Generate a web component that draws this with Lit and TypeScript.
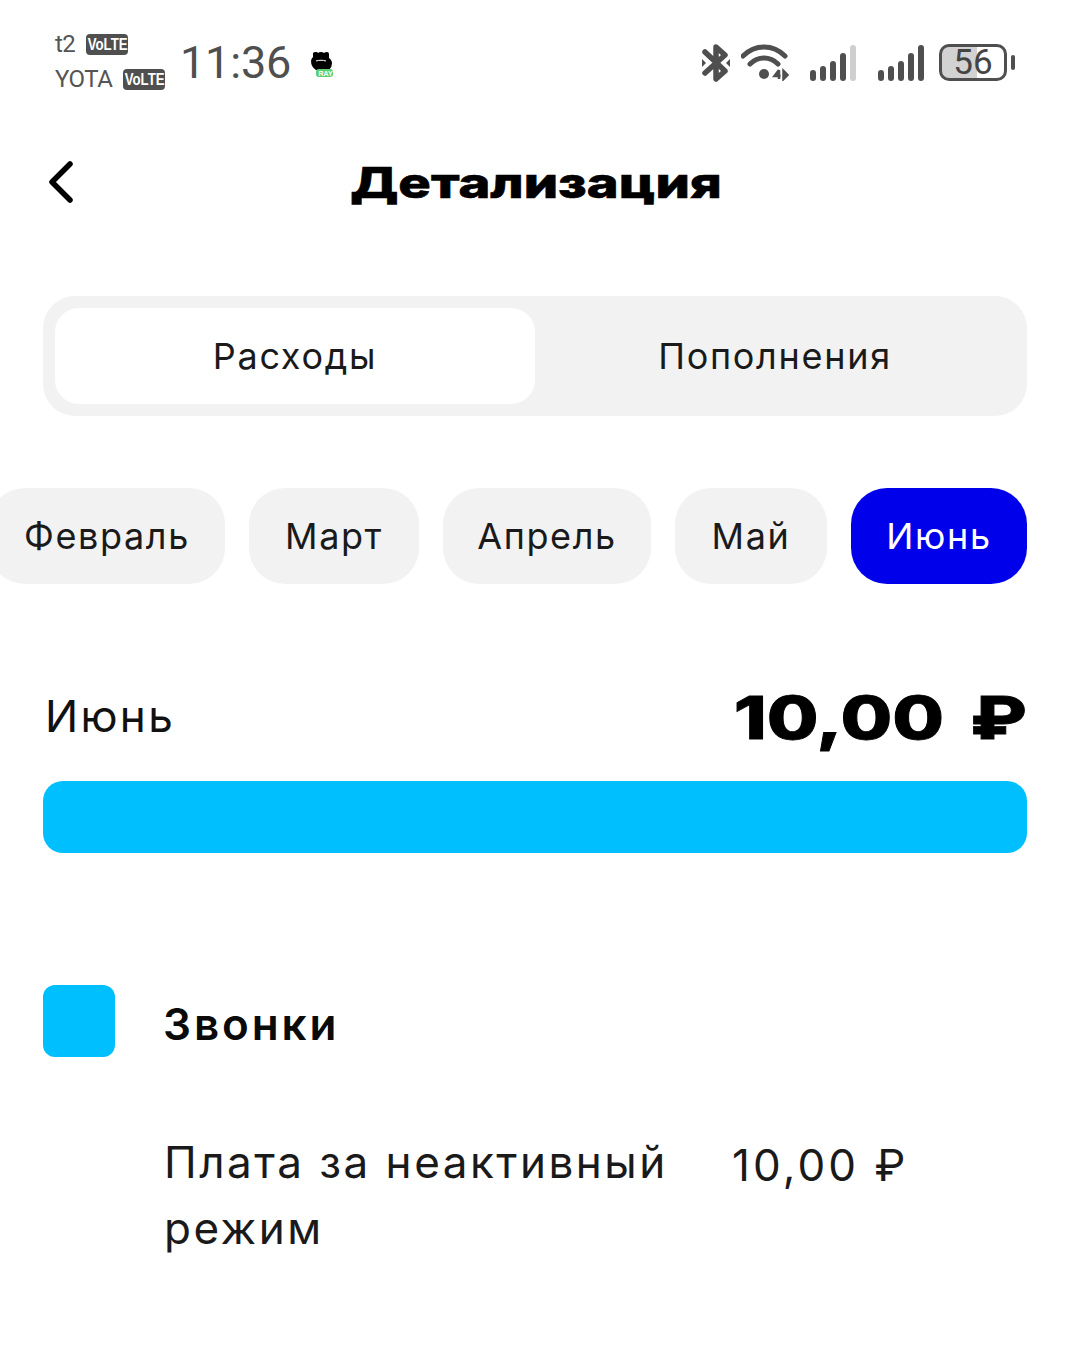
import { LitElement, html, svg, css } from "lit";
import { customElement } from "lit/decorators.js";

const months: [string, number, boolean][] = [
  ["Февраль", 236, false],
  ["Март", 170, false],
  ["Апрель", 208, false],
  ["Май", 152, false],
  ["Июнь", 176, true],
];

const bars = (heights: number[], lastDim: boolean) => html`
  <svg class="signal" width="46" height="38" viewBox="0 0 46 38">
    ${heights.map(
      (h, i) => svg`<rect x=${i * 10} y=${37 - h} width="6" height=${h} rx="3"
        fill=${lastDim && i === heights.length - 1 ? "#cfcfcf" : "#4f4f4f"}></rect>`
    )}
  </svg>`;

@customElement("app-root")
export class AppRoot extends LitElement {
  static styles = css`
    :host {
      display: block;
      width: 1065px;
      height: 1369px;
      background: #fff;
      overflow: hidden;
      font-family: "Inter", "Liberation Sans", sans-serif;
      color: #000;
    }
    .status {
      height: 124px;
      box-sizing: border-box;
      padding: 30px 50px 0 55px;
      display: flex;
      align-items: flex-start;
    }
    .carriers {
      width: 125px;
      display: flex;
      flex-direction: column;
      gap: 6px;
      font-family: "Roboto", sans-serif;
      font-size: 24px;
      line-height: 29px;
      color: #555;
    }
    .carrier {
      display: flex;
      align-items: center;
      gap: 11px;
      letter-spacing: -0.5px;
    }
    .volte {
      background: #4f4f4f;
      color: #fff;
      border-radius: 4px;
      height: 21px;
      width: 42px;
      display: flex;
      align-items: center;
      justify-content: center;
      letter-spacing: 0;
    }
    .volte span {
      display: block;
      font: 700 17px/21px "Liberation Sans", sans-serif;
      transform: scaleX(0.78);
    }
    .clock {
      font-family: "Roboto", sans-serif;
      font-size: 45px;
      line-height: 66px;
      color: #4f4f4f;
      letter-spacing: -0.2px;
      font-weight: 400;
    }
    .fist {
      margin: 21px 0 0 19px;
    }
    .fist-label {
      font: 700 7px "Liberation Sans", sans-serif;
      fill: #fff;
    }
    .icons {
      margin-left: auto;
      padding-top: 14px;
      display: flex;
      align-items: flex-start;
    }
    .wifi {
      margin-left: 9px;
      margin-top: -1px;
    }
    .signal {
      display: block;
      margin-left: 21px;
      margin-top: 0;
    }
    .signal + .signal {
      margin-left: 22px;
    }
    .battery {
      margin-left: 15px;
      width: 68px;
      height: 37px;
      box-sizing: border-box;
      border: 3px solid #4f4f4f;
      border-radius: 10px;
      background: linear-gradient(90deg, #d2d2d2 56%, #fff 56%);
      display: flex;
      align-items: center;
      justify-content: center;
      font: 400 35px/31px "Roboto", sans-serif;
      color: #444;
    }
    .nub {
      width: 4px;
      height: 15px;
      border-radius: 2px;
      background: #4f4f4f;
      margin: 11px 0 0 4px;
    }
    .header {
      height: 118px;
      box-sizing: border-box;
      padding-left: 6px;
      display: flex;
      align-items: center;
      justify-content: center;
      position: relative;
    }
    .back {
      position: absolute;
      left: 46px;
      top: 34px;
    }
    h1 {
      margin: 0;
      font: 800 42px/60px "Inter", sans-serif;
      transform: scaleX(1.29);
      letter-spacing: 0;
      -webkit-text-stroke: 0.6px #000;
    }
    .tabs {
      margin: 54px 38px 0 43px;
      height: 120px;
      box-sizing: border-box;
      padding: 12px;
      background: #f2f2f2;
      border-radius: 32px;
      display: grid;
      grid-template-columns: 1fr 1fr;
    }
    .tab {
      display: flex;
      align-items: center;
      justify-content: center;
      font-size: 36px;
      letter-spacing: 1.7px;
      color: #1a1a1a;
      border-radius: 24px;
    }
    .tab.on {
      background: #fff;
    }
    .chips {
      margin-top: 72px;
      padding-right: 38px;
      display: flex;
      justify-content: flex-end;
      gap: 24px;
    }
    .chip {
      flex: none;
      height: 96px;
      display: flex;
      align-items: center;
      justify-content: center;
      background: #f2f2f2;
      border-radius: 36px;
      font-size: 36px;
      letter-spacing: 1.6px;
      color: #1a1a1a;
    }
    .chip.on {
      background: #0000eb;
      color: #fff;
    }
    .total {
      margin: 98px 38px 0 43px;
      height: 72px;
      display: flex;
      align-items: center;
      justify-content: space-between;
    }
    .total .label {
      font-size: 44px;
      letter-spacing: 2.3px;
      color: #111;
      padding: 0 0 4px 2px;
    }
    .total .sum {
      font: 800 59px/72px "Inter", sans-serif;
      display: inline-block;
      transform-origin: right center;
      transform: scaleX(1.27);
      word-spacing: 7.5px;
      -webkit-text-stroke: 0.8px #000;
    }
    .bar {
      margin: 27px 38px 0 43px;
      height: 72px;
      border-radius: 20px;
      background: #00bfff;
    }
    .cat {
      margin: 132px 38px 0 43px;
      display: flex;
      align-items: center;
      gap: 48px;
    }
    .swatch {
      width: 72px;
      height: 72px;
      border-radius: 12px;
      background: #00bfff;
    }
    .cat .name {
      font-size: 44px;
      font-weight: 600;
      letter-spacing: 2.9px;
      color: #0a0a0a;
      padding-top: 6px;
    }
    .row {
      margin: 72px 38px 0 164px;
      display: flex;
      align-items: flex-start;
    }
    .row .desc {
      width: 568px;
      font-size: 44px;
      line-height: 66px;
      letter-spacing: 2.5px;
      color: #1a1a1a;
    }
    .row .amt {
      font-size: 44px;
      line-height: 72px;
      letter-spacing: 3.1px;
      color: #1a1a1a;
      white-space: nowrap;
    }
  `;

  render() {
    return html`
      <div class="status">
        <div class="carriers">
          <div class="carrier"><span>t2</span><span class="volte"><span>VoLTE</span></span></div>
          <div class="carrier"><span>YOTA</span><span class="volte"><span>VoLTE</span></span></div>
        </div>
        <div class="clock">11:36</div>
        <svg class="fist" width="24" height="27" viewBox="0 0 24 27">
          <path d="M3 2.5Q3 1 5 1h1.5Q7.500 1 8 2Q9 1 11 1t3 1Q15 1 17 1t2 2V7Q22 9 22 12.500 22 16 19 19H6Q1 16 1 10 1 8 3 6z" fill="#000"></path>
          <path d="M6 10c3-1 7-1 10 0" stroke="#fff" stroke-width="1" fill="none"></path>
          <rect x="6" y="18" width="17" height="8" rx="3" fill="#5ccf73"></rect>
          <text class="fist-label" x="8.500" y="24.500">RAY</text>
        </svg>
        <div class="icons">
          <svg width="30" height="38" viewBox="0 0 30 38" fill="none" stroke="#4f4f4f" stroke-width="5.500" stroke-linejoin="round" stroke-linecap="round">
            <path d="M3 8l20 19-9 8V3l9 8L3 29"></path>
            <path d="M0 15v8l4-4zM28 15v8l-4-4z" fill="#4f4f4f" stroke="none"></path>
          </svg>
          <svg class="wifi" width="48" height="38" viewBox="0 0 48 38" fill="none" stroke="#4f4f4f" stroke-width="5" stroke-linecap="round">
            <path d="M2 13C14 1 32 1 44 13"></path>
            <path d="M9 21c8-8 20-8 28 0"></path>
            <circle cx="23" cy="31" r="5" fill="#4f4f4f" stroke="none"></circle>
            <path d="M38 27l-4.500 6h6M38 27v9M42.500 28v8M42.500 28l4 4-4 4z" stroke-width="2.500" stroke-linecap="butt" fill="#4f4f4f"></path>
          </svg>
          ${bars([11, 15, 20, 28, 36], true)} ${bars([11, 15, 20, 28, 36], false)}
          <div class="battery">56</div>
          <div class="nub"></div>
        </div>
      </div>

      <div class="header">
        <svg class="back" width="30" height="46" viewBox="0 0 30 46" fill="none" stroke="#000" stroke-width="5.500" stroke-linecap="round" stroke-linejoin="round">
          <path d="M24 6L6 24l18 18"></path>
        </svg>
        <h1>Детализация</h1>
      </div>

      <div class="tabs">
        <div class="tab on">Расходы</div>
        <div class="tab">Пополнения</div>
      </div>

      <div class="chips">
        ${months.map(
          ([m, w, on]) => html`<div class="chip ${on ? "on" : ""}" style="width:${w}px">${m}</div>`
        )}
      </div>

      <div class="total">
        <span class="label">Июнь</span>
        <span class="sum">10,00 ₽</span>
      </div>
      <div class="bar"></div>

      <div class="cat">
        <div class="swatch"></div>
        <div class="name">Звонки</div>
      </div>
      <div class="row">
        <div class="desc">Плата за неактивный режим</div>
        <div class="amt">10,00 ₽</div>
      </div>
    `;
  }
}
